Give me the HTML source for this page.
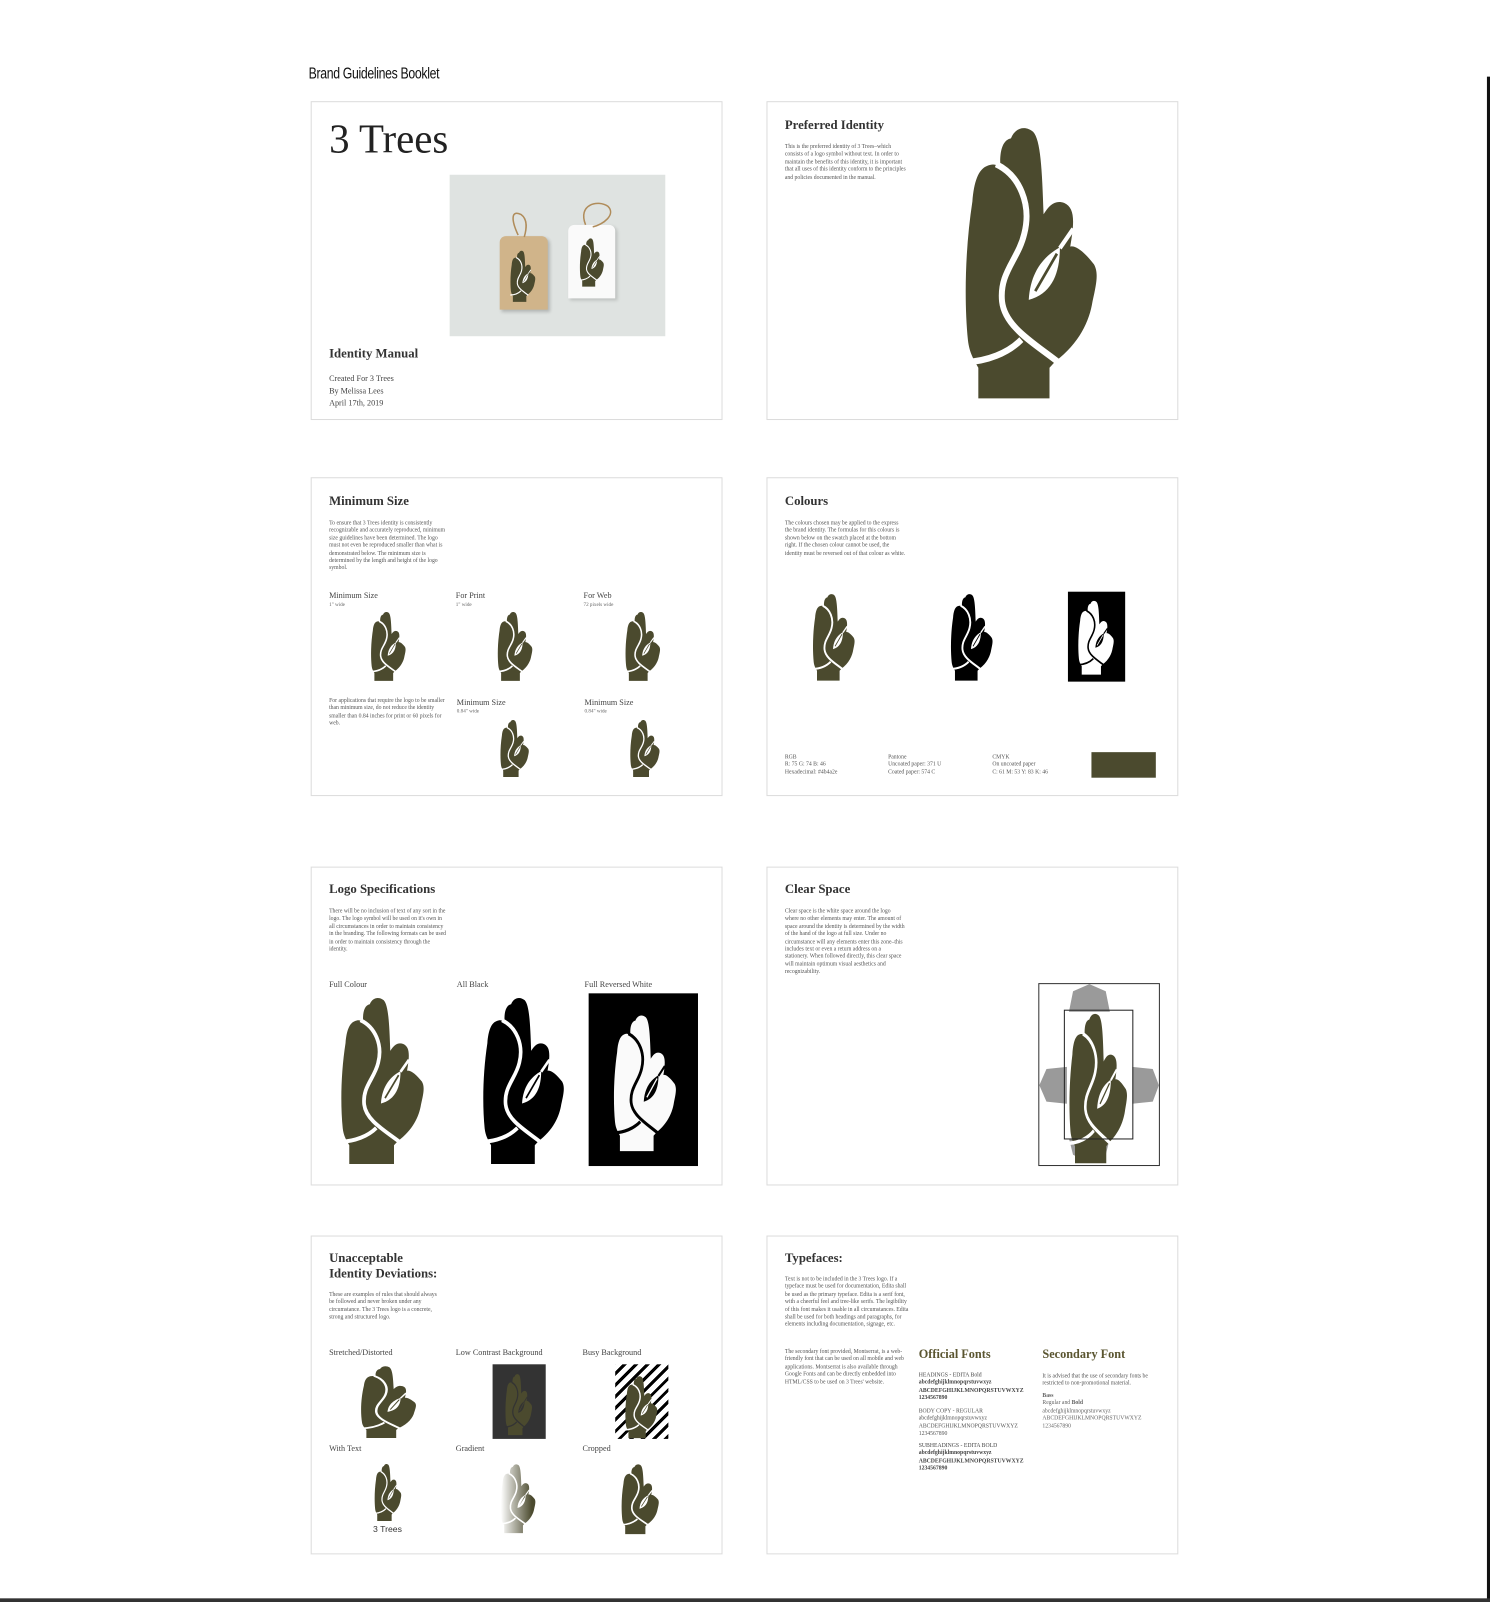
<!DOCTYPE html>
<html><head><meta charset="utf-8"><style>
html,body{margin:0;padding:0;background:#fff;width:1490px;height:1602px;overflow:hidden}
#w{position:absolute;left:0;top:0;width:1458px;height:1568px;transform:scale(1.02195);transform-origin:0 0;font-family:"Liberation Serif",serif;color:#333}
.a{position:absolute}
.card{position:absolute;width:403px;height:312px;border:1px solid #dcdcdc;background:#fff;box-sizing:border-box}
.h1{position:absolute;font-weight:bold;font-size:12.5px;color:#333;white-space:nowrap}
.p{position:absolute;font-size:5.6px;line-height:7.4px;color:#555}
.l{position:absolute;font-size:8px;color:#444;white-space:nowrap}
.s{position:absolute;font-size:5px;color:#666;white-space:nowrap}
svg.h{position:absolute;color:#4b4a2e;--g:#fff}
</style></head><body>
<svg width="0" height="0" style="position:absolute">
<defs>
<linearGradient id="gr" x1="0" x2="1" y1="0" y2="0"><stop offset="0" stop-color="#fff"/><stop offset="0.9" stop-color="#4b4a2e"/></linearGradient>
<symbol id="hand" viewBox="0 0 510 870" preserveAspectRatio="none">
<path style="fill:var(--f,currentColor)" d="M70 860 L70 765 C55 740 40 720 35 680 C22 560 25 400 50 250 C55 190 70 150 100 140 C125 130 140 140 145 150 C140 100 150 60 180 55 C195 20 230 15 255 35 C280 60 285 150 290 290 C310 260 330 245 360 255 C395 270 395 310 380 390 C400 385 430 410 460 445 C475 470 470 500 455 560 C445 620 410 690 330 745 L310 765 L310 860 Z"/>
<g fill="none" stroke="var(--g)" stroke-width="20">
<path d="M130 135 C210 170 250 260 225 350 C205 430 140 470 150 560 C160 640 260 690 345 752"/>
<path d="M25 748 C100 745 170 720 215 678"/>
<path d="M345 395 L390 335" stroke-width="14"/>
</g>
<path fill="var(--g)" d="M240 555 C245 470 290 420 345 392 C345 470 320 535 240 555 Z"/>
<path d="M262 528 L335 412" style="stroke:var(--f,currentColor)" stroke-width="9"/>
</symbol>
</defs></svg>
<div id="w">
<div class="a" style="left:302px;top:64px;font-family:'Liberation Sans',sans-serif;font-size:15px;letter-spacing:-0.4px;color:#111;transform:scaleX(0.8);transform-origin:0 0;white-space:nowrap">Brand Guidelines Booklet</div>
<div class="a" style="left:1455px;top:75px;width:3px;height:1493px;background:#111"></div>
<div class="a" style="left:0;top:1564px;width:1458px;height:4px;background:#333"></div>

<!-- card1 -->
<div class="card" style="left:304px;top:99px"></div>
<div class="a" style="left:322px;top:112px;font-size:40px;color:#222">3 Trees</div>
<div class="a" style="left:440px;top:171px;width:211px;height:158px;background:#dfe3e1"></div>
<div class="a" style="left:489px;top:231px;width:47px;height:72px;background:#d0b48a;border-radius:6px 6px 0 0;box-shadow:2px 2px 3px rgba(0,0,0,.2)"></div>
<div class="a" style="left:556px;top:220px;width:46px;height:72px;background:#fafafa;border-radius:6px 6px 0 0;box-shadow:2px 2px 3px rgba(0,0,0,.15)"></div>
<svg class="h" style="left:498px;top:244px;width:28px;height:52px"><use href="#hand"/></svg>
<svg class="h" style="left:566px;top:232px;width:27px;height:49px"><use href="#hand"/></svg>
<svg class="a" style="left:485px;top:190px" width="125" height="45" fill="none" stroke="#b08c5a" stroke-width="1.5"><path d="M22 40 C15 25 15 15 25 20 C32 25 30 35 28 42"/><path d="M88 30 C80 10 100 5 110 12 C118 20 105 30 95 32"/></svg>
<div class="h1" style="left:322px;top:339px">Identity Manual</div>
<div class="l" style="left:322px;top:366px">Created For 3 Trees</div>
<div class="l" style="left:322px;top:378px">By Melissa Lees</div>
<div class="l" style="left:322px;top:390px">April 17th, 2019</div>

<!-- card2 -->
<div class="card" style="left:750px;top:99px"></div>
<div class="h1" style="left:768px;top:115px">Preferred Identity</div>
<div class="p" style="left:768px;top:141px;width:120px">This is the preferred identity of 3 Trees–which consists of a logo symbol without text. In order to maintain the benefits of this identity, it is important that all uses of this identity conform to the principles and policies documented in the manual.</div>
<svg class="h" style="left:937px;top:118px;width:148px;height:275px"><use href="#hand"/></svg>

<!-- card3 -->
<div class="card" style="left:304px;top:467px"></div>
<div class="h1" style="left:322px;top:483px">Minimum Size</div>
<div class="p" style="left:322px;top:509px;width:118px">To ensure that 3 Trees identity is consistently recognizable and accurately reproduced, minimum size guidelines have been determined. The logo must not even be reproduced smaller than what is demonstrated below. The minimum size is determined by the length and height of the logo symbol.</div>
<div class="l" style="left:322px;top:578px">Minimum Size</div><div class="s" style="left:322px;top:590px">1" wide</div>
<div class="l" style="left:446px;top:578px">For Print</div><div class="s" style="left:446px;top:590px">1" wide</div>
<div class="l" style="left:571px;top:578px">For Web</div><div class="s" style="left:571px;top:590px">72 pixels wide</div>
<svg class="h" style="left:361px;top:597px;width:39px;height:70px"><use href="#hand"/></svg>
<svg class="h" style="left:485px;top:597px;width:39px;height:70px"><use href="#hand"/></svg>
<svg class="h" style="left:610px;top:597px;width:39px;height:70px"><use href="#hand"/></svg>
<div class="p" style="left:322px;top:683px;width:120px">For applications that require the logo to be smaller than minimum size, do not reduce the identity smaller than 0.84 inches for print or 60 pixels for web.</div>
<div class="l" style="left:447px;top:683px">Minimum Size</div><div class="s" style="left:447px;top:694px">0.84" wide</div>
<div class="l" style="left:572px;top:683px">Minimum Size</div><div class="s" style="left:572px;top:694px">0.84" wide</div>
<svg class="h" style="left:488px;top:703px;width:32px;height:58px"><use href="#hand"/></svg>
<svg class="h" style="left:615px;top:703px;width:33px;height:58px"><use href="#hand"/></svg>

<!-- card4 -->
<div class="card" style="left:750px;top:467px"></div>
<div class="h1" style="left:768px;top:483px">Colours</div>
<div class="p" style="left:768px;top:509px;width:118px">The colours chosen may be applied to the express the brand identity. The formulas for this colours is shown below on the swatch placed at the bottom right. If the chosen colour cannot be used, the identity must be reversed out of that colour as white.</div>
<svg class="h" style="left:793px;top:579px;width:47px;height:88px"><use href="#hand"/></svg>
<svg class="h" style="left:928px;top:579px;width:47px;height:88px;color:#000"><use href="#hand"/></svg>
<div class="a" style="left:1045px;top:579px;width:56px;height:88px;background:#000"></div>
<svg class="h" style="left:1053px;top:586px;width:40px;height:75px;color:#fff;--g:#000"><use href="#hand"/></svg>
<div class="p" style="left:768px;top:738px;width:90px">RGB<br>R: 75 G: 74 B: 46<br>Hexadecimal: #4b4a2e</div>
<div class="p" style="left:869px;top:738px;width:90px">Pantone<br>Uncoated paper: 371 U<br>Coated paper: 574 C</div>
<div class="p" style="left:971px;top:738px;width:90px">CMYK<br>On uncoated paper<br>C: 61 M: 53 Y: 83 K: 46</div>
<div class="a" style="left:1068px;top:736px;width:63px;height:25px;background:#4b4a2e"></div>

<!-- card5 -->
<div class="card" style="left:304px;top:848px"></div>
<div class="h1" style="left:322px;top:863px">Logo Specifications</div>
<div class="p" style="left:322px;top:889px;width:115px">There will be no inclusion of text of any sort in the logo. The logo symbol will be used on it's own in all circumstances in order to maintain consistency in the branding. The following formats can be used in order to maintain consistency through the identity.</div>
<div class="l" style="left:322px;top:959px">Full Colour</div>
<div class="l" style="left:447px;top:959px">All Black</div>
<div class="l" style="left:572px;top:959px">Full Reversed White</div>
<svg class="h" style="left:329px;top:972px;width:93px;height:169px"><use href="#hand"/></svg>
<svg class="h" style="left:468px;top:972px;width:91px;height:169px;color:#000"><use href="#hand"/></svg>
<div class="a" style="left:576px;top:972px;width:107px;height:169px;background:#000"></div>
<svg class="h" style="left:597px;top:990px;width:70px;height:138px;color:#fafafa;--g:#000"><use href="#hand"/></svg>

<!-- card6 -->
<div class="card" style="left:750px;top:848px"></div>
<div class="h1" style="left:768px;top:863px">Clear Space</div>
<div class="p" style="left:768px;top:889px;width:118px">Clear space is the white space around the logo where no other elements may enter. The amount of space around the identity is determined by the width of the hand of the logo at full size. Under no circumstance will any elements enter this zone–this includes text or even a return address on a stationery. When followed directly, this clear space will maintain optimum visual aesthetics and recognizability.</div>
<svg class="a" style="left:1016px;top:962px" width="120" height="180">
<g fill="#9a9a9a">
<path d="M34 8 L50 1 L66 8 L70 28 L30 28 Z"/>
<path d="M34 168 L50 176 L66 168 L70 152 L30 152 Z"/>
<path d="M8 84 L1 100 L8 116 L28 118 L28 82 Z"/>
<path d="M112 84 L118 100 L112 116 L92 118 L92 82 Z"/>
</g>
</svg>
<svg class="h" style="left:1043px;top:988px;width:65px;height:152px"><use href="#hand"/></svg>
<div class="a" style="left:1016px;top:962px;width:119px;height:179px;border:1.5px solid #333;box-sizing:border-box"></div>
<div class="a" style="left:1041px;top:988px;width:68px;height:127px;border:1px solid #222;box-sizing:border-box"></div>

<!-- card7 -->
<div class="card" style="left:304px;top:1209px"></div>
<div class="h1" style="left:322px;top:1224px;line-height:15px">Unacceptable<br>Identity Deviations:</div>
<div class="p" style="left:322px;top:1264px;width:112px">These are examples of rules that should always be followed and never broken under any circumstance. The 3 Trees logo is a concrete, strong and structured logo.</div>
<div class="l" style="left:322px;top:1319px">Stretched/Distorted</div>
<div class="l" style="left:446px;top:1319px">Low Contrast Background</div>
<div class="l" style="left:570px;top:1319px">Busy Background</div>
<svg class="h" style="left:350px;top:1335px;width:62px;height:73px"><use href="#hand"/></svg>
<div class="a" style="left:482px;top:1335px;width:52px;height:73px;background:#333"></div>
<svg class="h" style="left:493px;top:1343px;width:30px;height:62px;color:#4b4a2e;--g:#333"><use href="#hand"/></svg>
<div class="a" style="left:602px;top:1335px;width:52px;height:73px;background:repeating-linear-gradient(135deg,#fff 0 5px,#000 5px 8px)"></div>
<svg class="h" style="left:610px;top:1345px;width:36px;height:63px"><use href="#hand"/></svg>
<div class="l" style="left:322px;top:1413px">With Text</div>
<div class="l" style="left:446px;top:1413px">Gradient</div>
<div class="l" style="left:570px;top:1413px">Cropped</div>
<svg class="h" style="left:365px;top:1431px;width:30px;height:58px"><use href="#hand"/></svg>
<div class="a" style="left:365px;top:1491px;font-family:'Liberation Sans',sans-serif;font-size:8.5px;color:#333">3 Trees</div>
<svg class="h" style="left:488px;top:1431px;width:39px;height:70px;--f:url(#gr)"><use href="#hand"/></svg>
<svg class="h" style="left:606px;top:1431px;width:42px;height:71px"><use href="#hand"/></svg>

<!-- card8 -->
<div class="card" style="left:750px;top:1209px"></div>
<div class="h1" style="left:768px;top:1224px">Typefaces:</div>
<div class="p" style="left:768px;top:1249px;width:122px">Text is not to be included in the 3 Trees logo. If a typeface must be used for documentation, Edita shall be used as the primary typeface. Edita is a serif font, with a cheerful feel and tree-like serifs. The legibility of this font makes it usable in all circumstances. Edita shall be used for both headings and paragraphs, for elements including documentation, signage, etc.</div>
<div class="p" style="left:768px;top:1320px;width:122px">The secondary font provided, Montserrat, is a web-friendly font that can be used on all mobile and web applications. Montserrat is also available through Google Fonts and can be directly embedded into HTML/CSS to be used on 3 Trees' website.</div>
<div class="a" style="left:899px;top:1318px;font-size:12px;font-weight:bold;color:#5a5530">Official Fonts</div>
<div class="a" style="left:1020px;top:1318px;font-size:12px;font-weight:bold;color:#5a5530">Secondary Font</div>
<div class="p" style="left:899px;top:1343px;width:112px;color:#444">HEADINGS - EDITA Bold<br><b>abcdefghijklmnopqrstuvwxyz<br>ABCDEFGHIJKLMNOPQRSTUVWXYZ<br>1234567890</b></div>
<div class="p" style="left:899px;top:1378px;width:112px;color:#555">BODY COPY - REGULAR<br>abcdefghijklmnopqrstuvwxyz<br>ABCDEFGHIJKLMNOPQRSTUVWXYZ<br>1234567890</div>
<div class="p" style="left:899px;top:1412px;width:112px;color:#444">SUBHEADINGS - EDITA BOLD<br><b>abcdefghijklmnopqrstuvwxyz<br>ABCDEFGHIJKLMNOPQRSTUVWXYZ<br>1234567890</b></div>
<div class="p" style="left:1020px;top:1344px;width:118px">It is advised that the use of secondary fonts be restricted to non-promotional material.</div>
<div class="p" style="left:1020px;top:1363px;width:118px;color:#666"><b>Bass</b><br>Regular and <b>Bold</b><br>abcdefghijklmnopqrstuvwxyz<br>ABCDEFGHIJKLMNOPQRSTUVWXYZ<br>1234567890</div>
</div>
</body></html>
